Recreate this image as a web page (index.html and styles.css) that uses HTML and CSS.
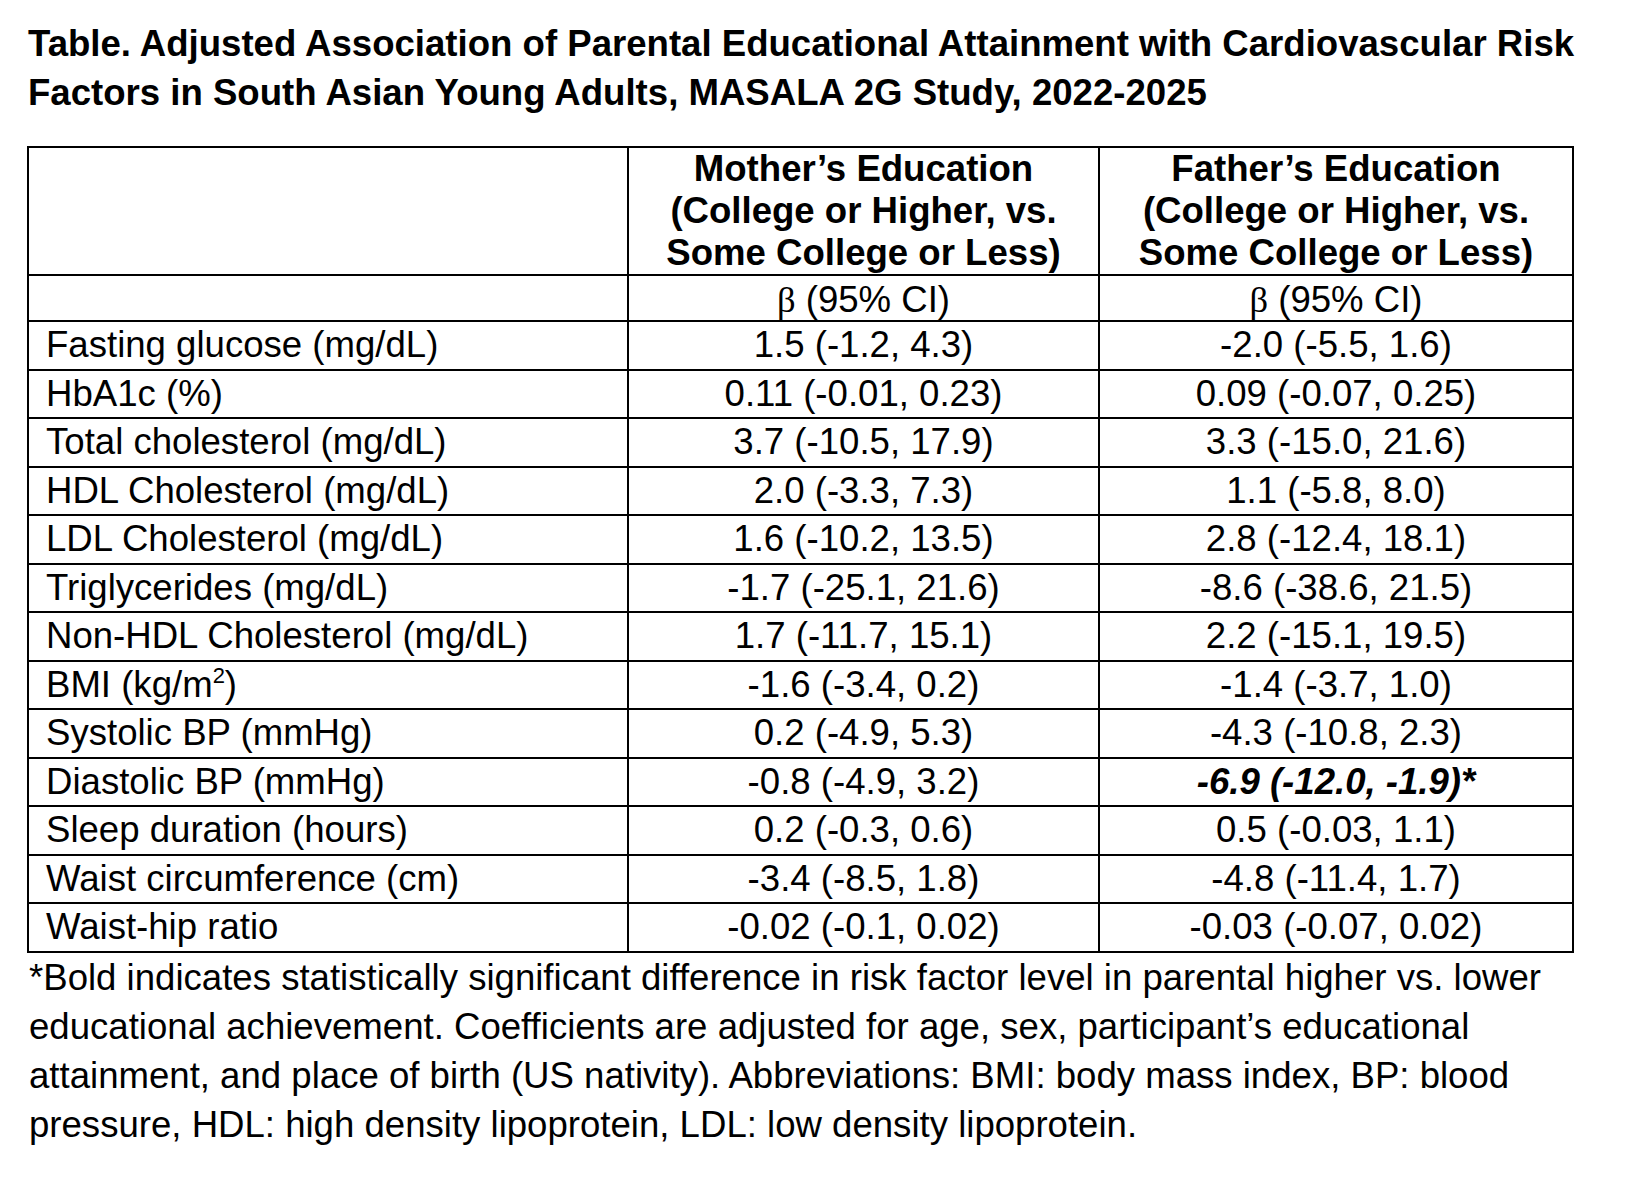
FILE: index.html
```html
<!DOCTYPE html>
<html lang="en">
<head>
<meta charset="utf-8">
<title>MASALA 2G Table</title>
<link rel="stylesheet" href="styles.css">
</head>
<body>
<div class="page">
  <h1 class="title">Table. Adjusted Association of Parental Educational Attainment with Cardiovascular Risk<br>Factors in South Asian Young Adults, MASALA 2G Study, 2022-2025</h1>
  <table class="results">
    <colgroup>
      <col class="c-label">
      <col class="c-mother">
      <col class="c-father">
    </colgroup>
    <thead>
      <tr class="head">
        <th></th>
        <th>Mother’s Education<br>(College or Higher, vs.<br>Some College or Less)</th>
        <th>Father’s Education<br>(College or Higher, vs.<br>Some College or Less)</th>
      </tr>
      <tr class="sub">
        <th></th>
        <th><span class="beta">β</span> (95% CI)</th>
        <th><span class="beta">β</span> (95% CI)</th>
      </tr>
    </thead>
    <tbody>
      <tr><td>Fasting glucose (mg/dL)</td><td>1.5 (-1.2, 4.3)</td><td>-2.0 (-5.5, 1.6)</td></tr>
      <tr><td>HbA1c (%)</td><td>0.11 (-0.01, 0.23)</td><td>0.09 (-0.07, 0.25)</td></tr>
      <tr><td>Total cholesterol (mg/dL)</td><td>3.7 (-10.5, 17.9)</td><td>3.3 (-15.0, 21.6)</td></tr>
      <tr><td>HDL Cholesterol (mg/dL)</td><td>2.0 (-3.3, 7.3)</td><td>1.1 (-5.8, 8.0)</td></tr>
      <tr><td>LDL Cholesterol (mg/dL)</td><td>1.6 (-10.2, 13.5)</td><td>2.8 (-12.4, 18.1)</td></tr>
      <tr><td>Triglycerides (mg/dL)</td><td>-1.7 (-25.1, 21.6)</td><td>-8.6 (-38.6, 21.5)</td></tr>
      <tr><td>Non-HDL Cholesterol (mg/dL)</td><td>1.7 (-11.7, 15.1)</td><td>2.2 (-15.1, 19.5)</td></tr>
      <tr><td>BMI (kg/m<sup>2</sup>)</td><td>-1.6 (-3.4, 0.2)</td><td>-1.4 (-3.7, 1.0)</td></tr>
      <tr><td>Systolic BP (mmHg)</td><td>0.2 (-4.9, 5.3)</td><td>-4.3 (-10.8, 2.3)</td></tr>
      <tr><td>Diastolic BP (mmHg)</td><td>-0.8 (-4.9, 3.2)</td><td><strong class="sig">-6.9 (-12.0, -1.9)*</strong></td></tr>
      <tr><td>Sleep duration (hours)</td><td>0.2 (-0.3, 0.6)</td><td>0.5 (-0.03, 1.1)</td></tr>
      <tr><td>Waist circumference (cm)</td><td>-3.4 (-8.5, 1.8)</td><td>-4.8 (-11.4, 1.7)</td></tr>
      <tr><td>Waist-hip ratio</td><td>-0.02 (-0.1, 0.02)</td><td>-0.03 (-0.07, 0.02)</td></tr>
    </tbody>
  </table>
  <p class="note">*Bold indicates statistically significant difference in risk factor level in parental higher vs. lower educational achievement. Coefficients are adjusted for age, sex, participant’s educational attainment, and place of birth (US nativity). Abbreviations: BMI: body mass index, BP: blood pressure, HDL: high density lipoprotein, LDL: low density lipoprotein.</p>
</div>
</body>
</html>
```

FILE: styles.css
```css
html, body {
  margin: 0;
  padding: 0;
  background: #ffffff;
}

body {
  font-family: "Liberation Sans", Arial, Helvetica, sans-serif;
  font-size: 36.6px;
  color: #000000;
}

.page {
  padding: 20px 0 0 27px;
  width: 1548px;
}

.title {
  margin: 0;
  padding-left: 1px;
  font-size: 36.6px;
  font-weight: bold;
  line-height: 48.5px;
  white-space: nowrap;
}

.results {
  margin-top: 29px;
  width: 1545px;
  border-collapse: collapse;
  table-layout: fixed;
}

.c-label { width: 600px; }
.c-mother { width: 471px; }
.c-father { width: 474px; }

.results th,
.results td {
  border: 2px solid #000000;
  padding: 0;
  font-size: 36.6px;
}

.results th {
  text-align: center;
  vertical-align: middle;
}

.head th {
  font-weight: bold;
  line-height: 42px;
}

.sub th {
  font-weight: normal;
  line-height: 40px;
  padding-top: 4px;
}

.beta {
  font-family: "Liberation Serif", "Times New Roman", serif;
}

.results td {
  line-height: 46.5px;
  text-align: center;
  white-space: nowrap;
}

.results td:first-child {
  text-align: left;
  padding-left: 17px;
}

.results sup {
  font-size: 0.6em;
  line-height: 0;
  vertical-align: 0.65em;
}

.sig {
  font-weight: bold;
  font-style: italic;
}

.note {
  margin: 0;
  padding-left: 2px;
  line-height: 49px;
}
```
